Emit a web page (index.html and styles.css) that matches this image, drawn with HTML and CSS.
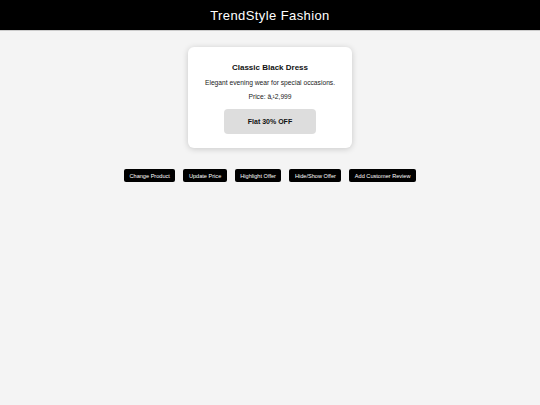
FILE: index.html
```html
<!DOCTYPE html>
<html>
<head>
<title>TrendStyle Fashion</title>
<link rel="stylesheet" href="styles.css">
</head>
<body>

<header class="site-header">
    <h1>TrendStyle Fashion</h1>
</header>

<div class="main">
    <div class="product-card">
        <h3 class="product-name">Classic Black Dress</h3>
        <p class="product-desc">Elegant evening wear for special occasions.</p>
        <p class="product-price">Price: â‚¹2,999</p>
        <div class="offer">Flat 30% OFF</div>
    </div>

    <div class="controls">
        <button>Change Product</button>
        <button>Update Price</button>
        <button>Highlight Offer</button>
        <button>Hide/Show Offer</button>
        <button>Add Customer Review</button>
    </div>
</div>

</body>
</html>
```

FILE: styles.css
```css
body {
    font-family: "Liberation Sans", Arial, sans-serif;
    background-color: #f4f4f4;
    margin: 0;
    padding: 0;
}
.site-header {
    background-color: #000;
    color: #fff;
    height: 30px;
    display: flex;
    align-items: center;
    justify-content: center;
    border-bottom: 1px solid #ccc;
}
.site-header h1 {
    margin: 0;
    font-size: 13px;
    font-weight: normal;
    letter-spacing: 0.4px;
}
.main {
    display: flex;
    flex-direction: column;
    align-items: center;
    padding-top: 16px;
}
.product-card {
    width: 164px;
    box-sizing: border-box;
    background-color: #fff;
    border-radius: 6px;
    box-shadow: 0 1px 6px rgba(0, 0, 0, 0.18);
    padding: 16px 10px 14px;
    display: flex;
    flex-direction: column;
    align-items: center;
    text-align: center;
}
.product-name {
    margin: 0;
    font-size: 8px;
    font-weight: bold;
    color: #111;
}
.product-desc {
    margin: 7px 0 0;
    font-size: 6.7px;
    color: #222;
}
.product-price {
    margin: 7px 0 0;
    font-size: 6.7px;
    color: #222;
}
.offer {
    margin-top: 9px;
    width: 92px;
    height: 25px;
    background-color: #ddd;
    border-radius: 4px;
    display: flex;
    align-items: center;
    justify-content: center;
    font-size: 7px;
    font-weight: bold;
    color: #111;
}
.controls {
    display: flex;
    gap: 8px;
    margin-top: 21px;
}
.controls button {
    background-color: #000;
    color: #fff;
    border: none;
    border-radius: 2px;
    font-family: "Liberation Sans", Arial, sans-serif;
    font-size: 5.6px;
    height: 13px;
    padding: 0 5.5px;
    cursor: pointer;
}
```
